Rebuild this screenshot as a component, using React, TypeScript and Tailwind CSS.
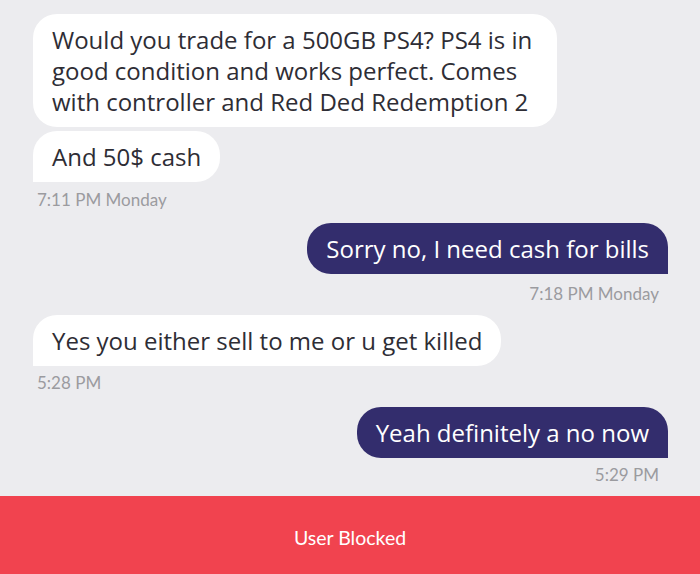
import React from "react";

const lato = { fontFamily: "Lato, 'Noto Sans', sans-serif" };
const body = { fontFamily: "'Open Sans', 'Noto Sans', sans-serif" };

const inBubble =
  "bg-white rounded-[24px] px-[19px] py-[10px] text-[24px] leading-[31px] text-[#2e2d35] whitespace-nowrap";
const outBubble =
  "bg-[#332d6d] rounded-[24px] rounded-br-none px-[19px] py-[10px] text-[24px] leading-[31px] text-white whitespace-nowrap";
const stamp = "text-[17px] leading-[20px] text-[#9b9b9f]";

export default function App() {
  return (
    <div className="w-full h-[574px] bg-[#ececef] flex flex-col overflow-hidden" style={lato}>
      <div className="flex-1 flex flex-col pt-[14px]">
        <div className={`ml-[33px] w-[524px] ${inBubble}`} style={body}>
          Would you trade for a 500GB PS4? PS4 is in
          <br />
          good condition and works perfect. Comes
          <br />
          with controller and Red Ded Redemption 2
        </div>
        <div className={`mt-[4px] ml-[33px] self-start rounded-bl-none ${inBubble}`} style={body}>
          And 50$ cash
        </div>
        <div className={`mt-[8px] ml-[37px] ${stamp}`}>7:11 PM Monday</div>

        <div className={`mt-[13px] mr-[32px] self-end ${outBubble}`} style={body}>
          Sorry no, I need cash for bills
        </div>
        <div className={`mt-[10px] mr-[41px] self-end ${stamp}`}>7:18 PM Monday</div>

        <div className={`mt-[11px] ml-[33px] self-start rounded-bl-none ${inBubble}`} style={body}>
          Yes you either sell to me or u get killed
        </div>
        <div className={`mt-[7px] ml-[37px] ${stamp}`}>5:28 PM</div>

        <div className={`mt-[14px] mr-[32px] self-end ${outBubble}`} style={body}>
          Yeah definitely a no now
        </div>
        <div className={`mt-[7px] mr-[41px] self-end ${stamp}`}>5:29 PM</div>
      </div>
      <div className="h-[78px] shrink-0 bg-[#f1434f] flex items-center justify-center pt-[5px] text-white text-[19.5px]">
        User Blocked
      </div>
    </div>
  );
}
